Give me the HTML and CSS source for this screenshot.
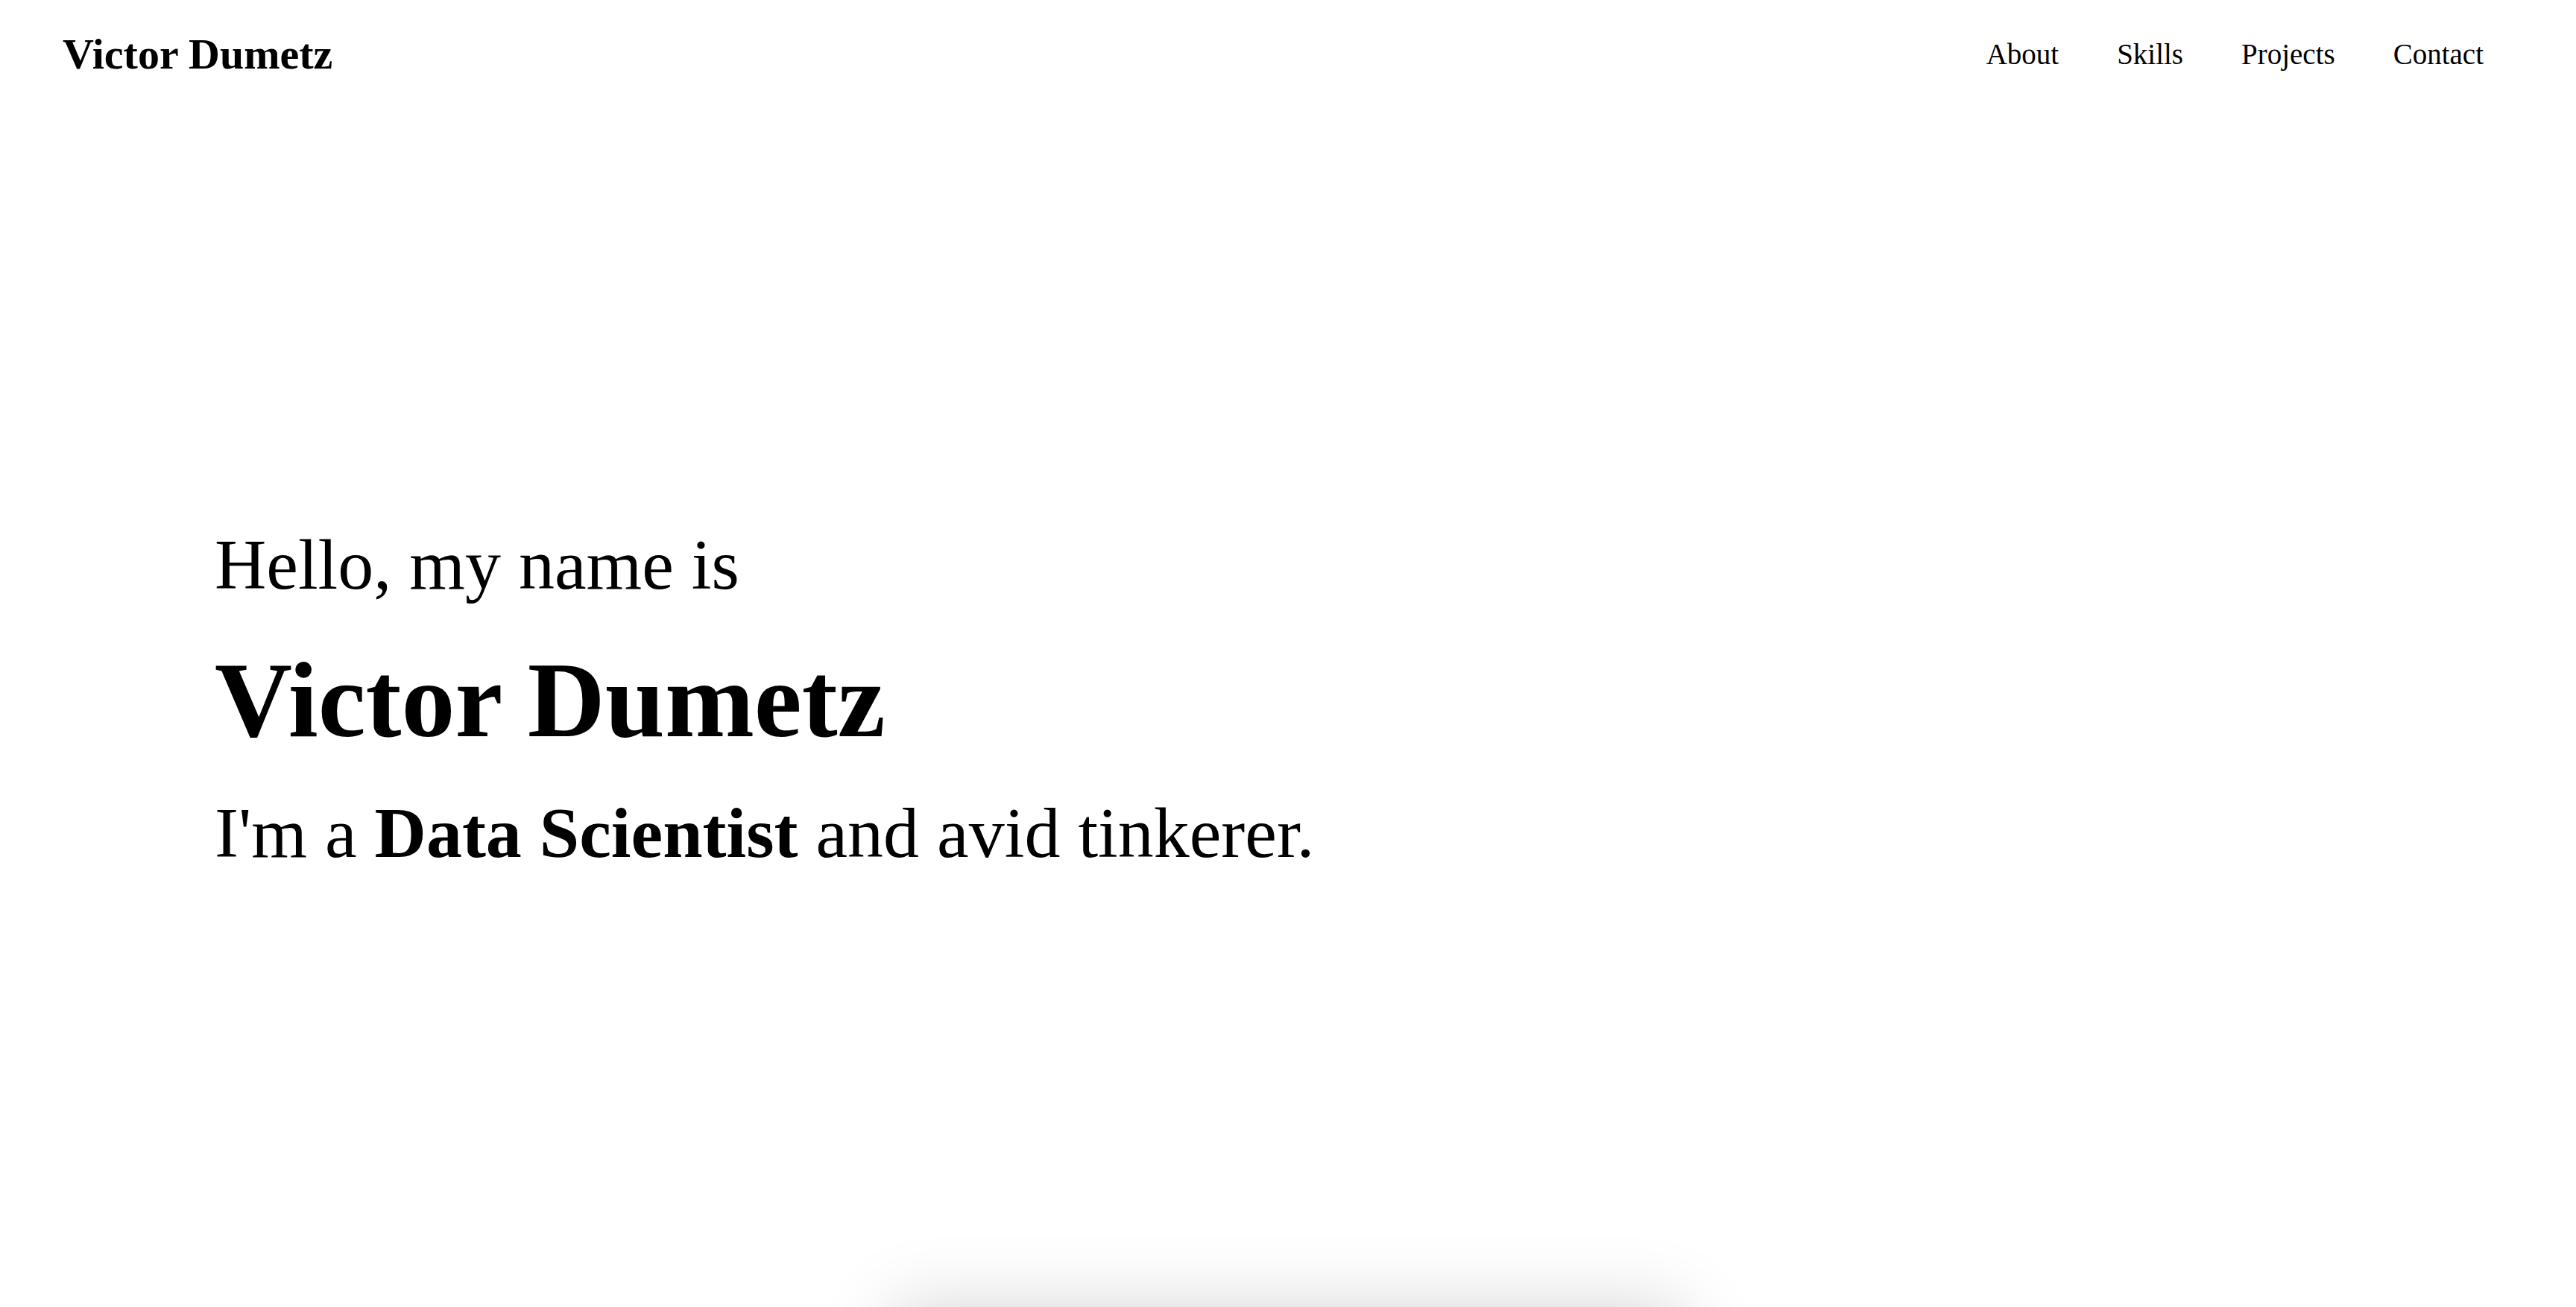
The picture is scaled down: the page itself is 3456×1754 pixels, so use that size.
FILE: index.html
```html
<!DOCTYPE html>
<html lang="en">
<head>
<meta charset="utf-8">
<title>Victor Dumetz</title>
<link rel="stylesheet" href="styles.css">
</head>
<body>
<header class="site-header">
  <a class="brand" href="#">Victor Dumetz</a>
  <nav>
    <ul class="nav-list">
      <li><a href="#about">About</a></li>
      <li><a href="#skills">Skills</a></li>
      <li><a href="#projects">Projects</a></li>
      <li><a href="#contact">Contact</a></li>
    </ul>
  </nav>
</header>
<main>
  <section class="hero">
    <p class="hello">Hello, my name is</p>
    <h1 class="name">Victor Dumetz</h1>
    <p class="tagline">I'm a <strong>Data Scientist</strong> and avid tinkerer.</p>
  </section>
  <section class="about" id="about">
    <div class="card"></div>
  </section>
</main>
</body>
</html>
```
FILE: styles.css
```css
html, body {
  margin: 0;
  padding: 0;
  background: #ffffff;
  color: #000000;
  font-family: "Liberation Serif", "Times New Roman", serif;
}

a {
  color: inherit;
  text-decoration: none;
}

.site-header {
  height: 144px;
  display: flex;
  align-items: center;
  justify-content: space-between;
  padding: 0 85px 0 84px;
}

.brand {
  font-size: 58px;
  font-weight: bold;
}

.nav-list {
  list-style: none;
  margin: 0;
  padding: 0;
  display: flex;
}

.nav-list a {
  display: block;
  font-size: 39px;
  padding: 0 39px;
}

.hero {
  height: calc(100vh - 144px);
  box-sizing: border-box;
  display: flex;
  flex-direction: column;
  justify-content: center;
  padding: 0 0 24px 288px;
}

.hello {
  font-size: 96px;
  margin: 0 0 44px;
}

.name {
  font-size: 144px;
  font-weight: bold;
  margin: 0 0 40px;
  line-height: normal;
}

.tagline {
  font-size: 96px;
  margin: 0;
}

.about {
  display: flex;
  justify-content: center;
  padding-bottom: 200px;
}

.card {
  width: 1060px;
  height: 800px;
  background: #ffffff;
  box-shadow: 0 0 90px rgba(0, 0, 0, 0.17);
}
```
